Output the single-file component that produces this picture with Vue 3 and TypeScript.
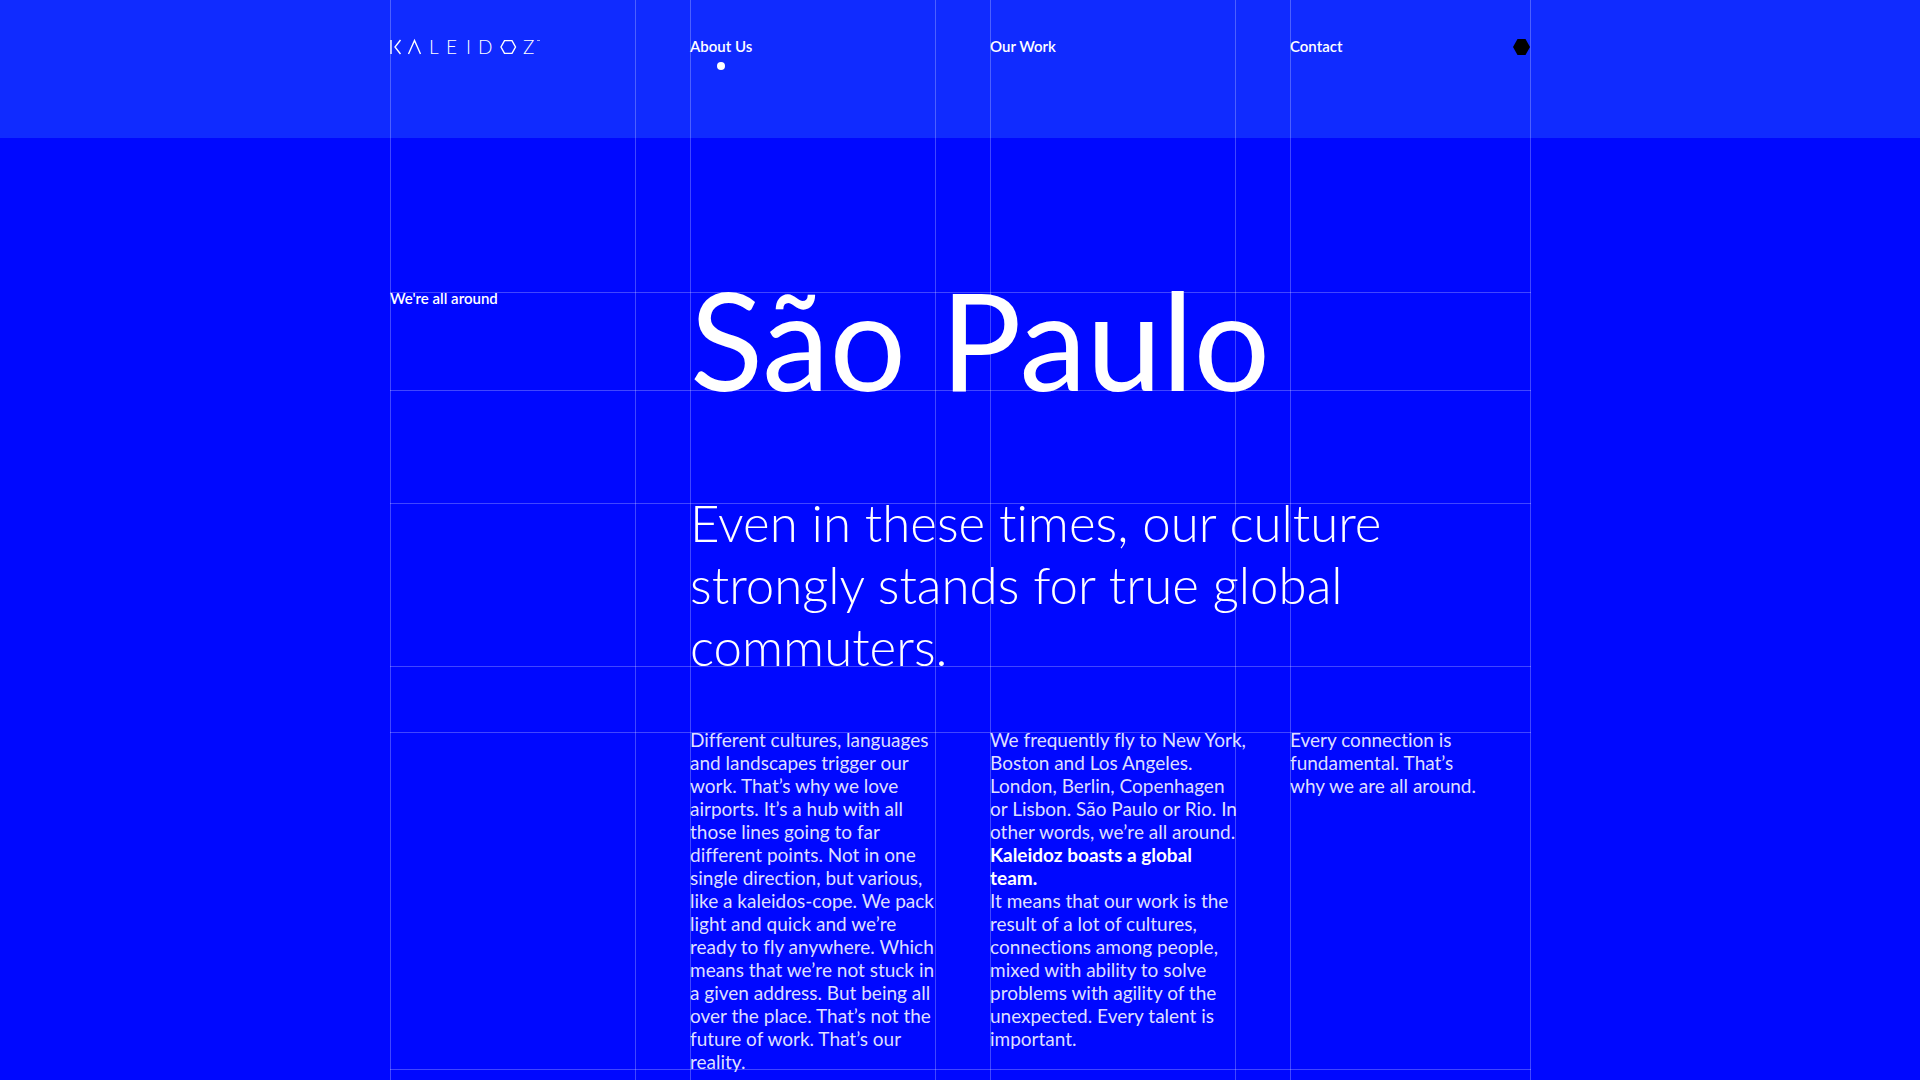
<script setup lang="ts">
interface NavItem {
  label: string
  href: string
  active: boolean
}

interface Line {
  text: string
  strong?: boolean
}

const nav: NavItem[] = [
  { label: 'About Us', href: '#about', active: true },
  { label: 'Our Work', href: '#work', active: false },
  { label: 'Contact', href: '#contact', active: false },
]

const intro: string[] = [
  'Even in these times, our culture',
  'strongly stands for true global',
  'commuters.',
]

const columns: Line[][] = [
  [
    { text: 'Different cultures, languages' },
    { text: 'and landscapes trigger our' },
    { text: 'work. That’s why we love' },
    { text: 'airports. It’s a hub with all' },
    { text: 'those lines going to far' },
    { text: 'different points. Not in one' },
    { text: 'single direction, but various,' },
    { text: 'like a kaleidos-cope. We pack' },
    { text: 'light and quick and we’re' },
    { text: 'ready to fly anywhere. Which' },
    { text: 'means that we’re not stuck in' },
    { text: 'a given address. But being all' },
    { text: 'over the place. That’s not the' },
    { text: 'future of work. That’s our' },
    { text: 'reality.' },
  ],
  [
    { text: 'We frequently fly to New York,' },
    { text: 'Boston and Los Angeles.' },
    { text: 'London, Berlin, Copenhagen' },
    { text: 'or Lisbon. São Paulo or Rio. In' },
    { text: 'other words, we’re all around.' },
    { text: 'Kaleidoz boasts a global', strong: true },
    { text: 'team.', strong: true },
    { text: 'It means that our work is the' },
    { text: 'result of a lot of cultures,' },
    { text: 'connections among people,' },
    { text: 'mixed with ability to solve' },
    { text: 'problems with agility of the' },
    { text: 'unexpected. Every talent is' },
    { text: 'important.' },
  ],
  [
    { text: 'Every connection is' },
    { text: 'fundamental. That’s' },
    { text: 'why we are all around.' },
  ],
]
</script>

<template>
  <div class="page">
    <div class="rules" aria-hidden="true">
      <div class="rules-inner columns">
        <span v-for="n in 4" :key="n" class="rule"></span>
      </div>
    </div>

    <header class="header">
      <div class="columns wrap">
        <a href="#home" class="logo" aria-label="Kaleidoz">
          <svg width="152" height="24" viewBox="0 -5 152 24">
            <g fill="none" stroke="#fff" stroke-width="1.4">
              <path d="M1 1V15M10.500 1L5 8L10.500 15" />
              <path d="M18.500 15L24.500 1.500L30.500 15" />
              <path d="M114.500 1.600H122L125.500 8L122 14.400H114.500L111 8Z" />
            </g>
            <text x="39 56 76 88 133" y="15">LEIDZ</text>
            <path d="M147 1.500H150" stroke="#fff" stroke-opacity="0.6" />
          </svg>
        </a>
        <nav class="nav" aria-label="Main">
          <a v-for="item in nav" :key="item.label" :href="item.href" class="nav-link" :class="{ active: item.active }">{{ item.label }}</a>
        </nav>
        <button type="button" class="theme" aria-label="Switch theme">
          <svg width="17" height="16" viewBox="0 0 17 16"><path d="M4.500 0H12.500L17 8L12.500 16H4.500L0 8Z" /></svg>
        </button>
      </div>
    </header>

    <main class="wrap main">
      <section class="row columns">
        <h2 class="eyebrow">We're all around</h2>
        <h1 class="title">São Paulo</h1>
      </section>

      <section class="row columns intro-row">
        <p class="intro"><span v-for="line in intro" :key="line" class="line">{{ line }}</span></p>
      </section>

      <section class="row columns body-row">
        <div v-for="(column, i) in columns" :key="i" class="copy">
          <component :is="line.strong ? 'strong' : 'span'" v-for="line in column" :key="line.text" class="line">{{ line.text }}</component>
        </div>
      </section>
    </main>
  </div>
</template>

<style>
body {
  margin: 0;
  background: #0008ff;
}
</style>

<style scoped>
.page {
  position: relative;
  box-sizing: border-box;
  min-height: 100vh;
  color: #fff;
  background: #0008ff;
  font-family: Lato, "Liberation Sans", sans-serif;
  font-variant-ligatures: none;
}

.wrap,
.rules-inner {
  position: relative;
  width: 100%;
  max-width: 1140px;
  margin: 0 auto;
}

.columns {
  display: grid;
  grid-template-columns: minmax(0, 245fr) minmax(0, 245fr) minmax(0, 245fr) minmax(0, 240fr);
  column-gap: 55px;
}

.rules {
  position: absolute;
  inset: 0;
  z-index: 1;
  pointer-events: none;
}

.rules-inner {
  height: 100%;
}

.rule {
  margin-right: -1px;
  border: solid rgba(255, 255, 255, 0.25);
  border-width: 0 1px;
}

.header {
  box-sizing: border-box;
  height: 138px;
  padding-top: 34px;
  background: #102bff;
}

.logo,
.logo svg {
  display: block;
}

.logo text {
  fill: #fff;
  font-size: 19px;
  font-weight: 300;
}

.nav {
  display: grid;
  grid-column: 2 / 5;
  grid-template-columns: 245fr 245fr 240fr;
  column-gap: 55px;
  padding-top: 1px;
}

.nav-link {
  position: relative;
  justify-self: start;
  color: #fff;
  font-size: 15px;
  font-weight: 600;
  line-height: 22px;
  text-decoration: none;
}

.nav-link.active::after {
  position: absolute;
  top: 27px;
  left: 50%;
  width: 8px;
  height: 8px;
  margin-left: -4px;
  border-radius: 50%;
  background: #fff;
  content: "";
}

.theme {
  position: absolute;
  top: 5px;
  right: 0;
  padding: 0;
  border: 0;
  background: none;
}

.theme svg {
  display: block;
}

.main {
  padding: 154px 0 10px;
}

.row {
  box-sizing: border-box;
  margin-right: -1px;
  padding-right: 1px;
  border: solid rgba(255, 255, 255, 0.25);
  border-width: 1px 0;
}

.eyebrow {
  margin: 0;
  font-size: 15px;
  font-weight: 600;
  line-height: 11px;
}

.title {
  grid-column: 2 / 5;
  height: 97px;
  margin: 0;
  font-size: 135px;
  font-weight: 400;
  line-height: 92px;
  white-space: nowrap;
}

.intro-row {
  height: 164px;
  margin-top: 112px;
}

.intro {
  grid-column: 2 / 5;
  margin: -12px 0 0;
  font-size: 51px;
  font-weight: 300;
  line-height: 62px;
}

.body-row {
  height: 338px;
  margin-top: 65px;
}

.copy {
  margin-top: -5px;
  color: rgba(255, 255, 255, 0.88);
  font-size: 19px;
  font-weight: 400;
  line-height: 23px;
}

.copy strong {
  color: #fff;
}

.copy:first-child {
  grid-column-start: 2;
}

.line {
  display: block;
  white-space: nowrap;
}
</style>
